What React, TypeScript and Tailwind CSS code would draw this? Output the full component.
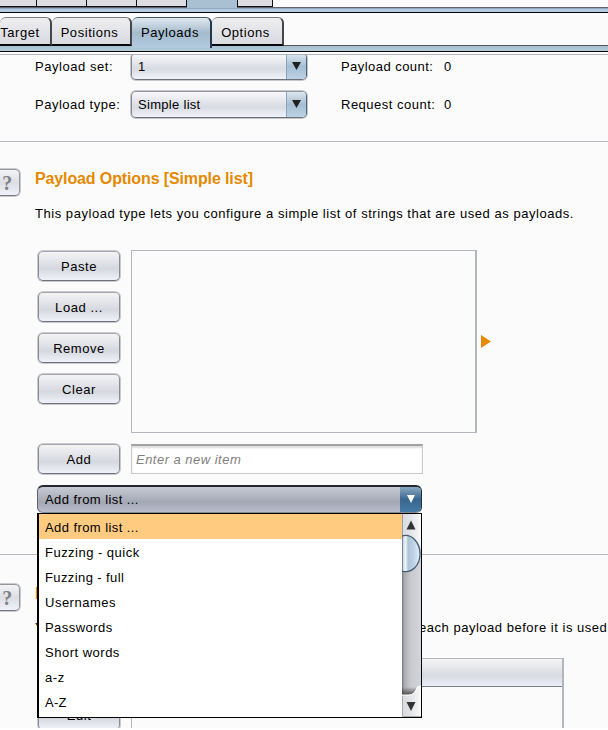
import type { ReactNode } from 'react';

const items = [
  ['Add from list ...', 'tracking-[0.42px]'],
  ['Fuzzing - quick', 'tracking-[0.48px]'],
  ['Fuzzing - full', 'tracking-[0.4px]'],
  ['Usernames', 'tracking-[0.5px]'],
  ['Passwords', 'tracking-[0.45px]'],
  ['Short words', 'tracking-[0.5px]'],
  ['a-z', 'tracking-[0.6px]'],
  ['A-Z', 'tracking-[0.3px]'],
];

function Button({ children, className = '' }: { children: ReactNode; className?: string }) {
  return (
    <button className={`mx-px flex h-[30px] w-[82px] shrink-0 items-center justify-center rounded-[5px] border border-t-[#a5a7ac] border-x-[#8a8c92] border-b-[#70727a] bg-linear-to-b from-[#f4f4f6] via-[#d6d8df] via-60% to-[#f0f2fb] pt-[2px] shadow-[0_0_0_1px_#c9cacf] ${className}`}>
      {children}
    </button>
  );
}

function Select({ value, className = '' }: { value: string; className?: string }) {
  return (
    <div className={`mr-px ml-px flex h-[27px] w-[176px] overflow-hidden rounded-[5px] border border-t-[#94969c] border-r-[#4c6478] border-b-[#6d7079] border-l-[#85878d] bg-linear-to-b from-[#f8f8fa] via-[#d9dbe3] via-60% to-[#f1f2fa] shadow-[0_0_0_1px_#c5c7cc] ${className}`}>
      <span className="flex flex-1 items-center pt-px pl-[6px]">{value}</span>
      <span className="flex w-[20px] items-center justify-center border-l border-[#8ca5ba] bg-linear-to-b from-[#dce7ef] via-[#a5bed2] via-50% to-[#bdd3e5] pb-px">
        <svg width="9" height="8" viewBox="0 0 9 8"><path d="M0 0H9L4.5 8Z" fill="#202020" /></svg>
      </span>
    </div>
  );
}

function Help() {
  return (
    <div className="-ml-[7px] flex h-[27px] w-[27px] shrink-0 items-center justify-center rounded-[5px] border border-[#94969c] border-b-[#777981] bg-linear-to-b from-[#f4f4f6] via-[#dcdee4] to-[#f0f2fa] pl-[2px] font-['Liberation_Serif',serif] text-[20px] font-bold text-[#808185] shadow-[0_0_0_1px_#c9cacf]">
      ?
    </div>
  );
}

function Tab({ label, active = false, className }: { label: string; active?: boolean; className: string }) {
  return (
    <div className={`flex shrink-0 items-center justify-center rounded-t-[6px] border-t border-r-2 ${active ? 'h-[31px] border-t-[#43566a] border-r-[#24364a] bg-linear-to-b from-[#e1e8ee] via-[#a4bbcd] via-50% to-[#b3cbdf]' : 'h-[29px] border-b-2 border-t-[#77797e] border-r-[#44464d] border-b-[#08080f] bg-linear-to-b from-[#eeeef0] to-[#d9dae0] pt-[4px]'} ${className}`}>
      {label}
    </div>
  );
}

export default function App() {
  return (
    <div className="h-[730px] w-[608px] overflow-hidden bg-white font-['Liberation_Sans',Arial,sans-serif] text-[13px] leading-[16px] tracking-[0.55px] text-black">
      <div className="relative h-[728px] overflow-hidden bg-[#fbfbfb]">
        <div className="flex h-[8px] border-b border-[#60636a]">
          <div className="w-[37px] border-r border-b border-[#101018] bg-[#dcdce1]" />
          <div className="w-[50px] border-r border-b border-[#101018] bg-[#dcdce1]" />
          <div className="w-[50px] border-r border-b border-[#101018] bg-[#dcdce1]" />
          <div className="w-[50px] border-r border-b border-[#101018] bg-[#dcdce1]" />
          <div className="h-[8px] w-[50px] bg-[#a9c0d2]" />
          <div className="w-[36px] border-x border-b border-[#101018] bg-[#dcdce1]" />
        </div>
        <div className="h-[5px] border-t border-b border-t-[#91a9be] border-b-[#05050c] bg-[#b3cce2]" />
        <div className="flex h-[33px] border-b border-[#55585f] pt-[4px]">
          <Tab label="Target" className="w-[52px] pr-[10px]" />
          <Tab label="Positions" className="w-[80px] pr-[3px]" />
          <Tab label="Payloads" active className="w-[80px] pr-[2px]" />
          <Tab label="Options" className="w-[72px] pr-[3px]" />
        </div>
        <div className="h-[6px] border-b border-[#05050c] bg-linear-to-b from-[#a7bfd0] to-[#b3cdd9]" />
        <div className="h-[3px] border-b border-[#b1b3ba] bg-white" />

        <section className="h-[87px] overflow-hidden border-b border-[#b9bac1] pl-[35px]">
          <div className="-mt-[3px] flex h-[28px] items-center">
            <span className="w-[95px] pt-[2px] tracking-[0.55px]">Payload set:</span>
            <Select value="1" />
            <span className="ml-[33px] w-[103px] pt-[2px] tracking-[0.45px]">Payload count:</span>
            <span className="pt-[2px]">0</span>
          </div>
          <div className="mt-[10px] flex h-[28px] items-center">
            <span className="w-[95px] pt-[2px] tracking-[0.5px]">Payload type:</span>
            <Select value="Simple list" className="tracking-[0.3px]" />
            <span className="ml-[33px] w-[103px] pt-[2px] tracking-[0.5px]">Request count:</span>
            <span className="pt-[2px]">0</span>
          </div>
        </section>

        <section className="h-[413px] border-b border-[#b9bac1] pt-[26px]">
          <div className="flex h-[28px] items-start pt-px">
            <Help />
            <h2 className="-mt-px ml-[15px] text-[16px] leading-[21px] font-bold tracking-[-0.12px] text-[#e58900]">Payload Options [Simple list]</h2>
          </div>
          <p className="mt-[10px] pl-[35px] tracking-[0.54px]">This payload type lets you configure a simple list of strings that are used as payloads.</p>
          <div className="mt-[28px] flex pl-[37px]">
            <div className="flex flex-col gap-[11px] pt-px">
              <Button>Paste</Button>
              <Button>Load ...</Button>
              <Button>Remove</Button>
              <Button>Clear</Button>
            </div>
            <div className="ml-[10px] h-[183px] w-[346px] border border-r-2 border-[#b4b6bf]" />
            <svg className="mt-[85px] ml-[4px]" width="10" height="13" viewBox="0 0 10 13"><path d="M0 0L10 6.5L0 13Z" fill="#e58900" /></svg>
          </div>
          <div className="mt-[11px] flex h-[31px] pl-[37px]">
            <Button>Add</Button>
            <div className="ml-[10px] flex h-[30px] w-[292px] items-center border border-t-2 border-[#c9cacd] border-t-[#a1a2a4] bg-white pl-[4px] tracking-[0.48px] text-[#808080] italic shadow-[inset_0_2px_2px_#dddddd]">Enter a new item</div>
          </div>
          <div className="mt-[10px] ml-[37px] flex h-[28px] w-[385px] overflow-hidden rounded-[6px] border border-t-2 border-t-[#25272d] border-r-[#1c3146] border-b-[#858893] border-l-[#5f6269] bg-linear-to-b from-[#c8cbd4] via-[#a4a8b4] via-60% to-[#b9bdcc]">
            <span className="flex flex-1 items-center pt-px pl-[7px] tracking-[0.42px]">Add from list ...</span>
            <span className="flex w-[21px] items-center justify-center bg-linear-to-b from-[#8caac2] via-[#39668e] via-50% to-[#457aa6] pb-px">
              <svg width="8" height="8" viewBox="0 0 8 8"><path d="M0 0H8L4 8Z" fill="#fff" /></svg>
            </span>
          </div>
        </section>

        <section className="pt-[28px]">
          <div className="flex h-[28px] items-start pt-px">
            <Help />
            <h2 className="-mt-px ml-[15px] text-[16px] leading-[21px] font-bold text-[#e58900]">Payload Processing</h2>
          </div>
          <p className="mt-[9px] flex pl-[35px] whitespace-nowrap">
            <span className="w-[384px] shrink-0 tracking-[0.55px]">You can define rules to perform various processing tasks on</span>
            <span className="tracking-[0.52px]">each payload before it is used</span>
          </p>
          <div className="mt-[22px] flex pl-[37px]">
            <div className="flex flex-col gap-[11px] pt-px">
              <Button>Add</Button>
              <Button>Edit</Button>
            </div>
            <div className="ml-[10px] h-[90px] w-[433px] border border-r-2 border-[#b4b6bf]">
              <div className="h-[28px] border-b border-[#7c8089] bg-linear-to-b from-[#f4f4f5] via-[#d9dbe1] via-60% to-[#ebeef8]" />
            </div>
          </div>
        </section>

        <div className="absolute top-[513px] left-[37px] flex h-[205px] w-[385px] border border-l-2 border-black bg-white">
          <ul className="w-[363px]">
            {items.map(([label, tracking], i) => (
              <li key={label} className={`flex h-[25px] items-center pt-[2px] pl-[6px] ${tracking} ${i === 0 ? 'bg-[#ffcb80]' : ''}`}>{label}</li>
            ))}
          </ul>
          <svg width="19" height="203" viewBox="0 0 19 203">
            <defs>
              <linearGradient id="track"><stop offset="0" stopColor="#77787e" /><stop offset=".12" stopColor="#aaaab1" /><stop offset=".45" stopColor="#c8c8ce" /><stop offset="1" stopColor="#d4d5dc" /></linearGradient>
              <linearGradient id="end"><stop offset="0" stopColor="#d8dae0" /><stop offset=".45" stopColor="#e2e4e8" /><stop offset="1" stopColor="#fafafa" /></linearGradient>
              <linearGradient id="thumb"><stop offset="0" stopColor="#b7cadb" /><stop offset=".2" stopColor="#f0f5fa" /><stop offset=".34" stopColor="#adc4d8" /><stop offset=".65" stopColor="#bed4e6" /><stop offset="1" stopColor="#e0f2ff" /></linearGradient>
              <linearGradient id="shade" x1="0" y1="0" x2="0" y2="1"><stop offset="0" stopColor="#333" stopOpacity="0" /><stop offset="1" stopColor="#333" stopOpacity=".8" /></linearGradient>
            </defs>
            <rect width="19" height="203" fill="url(#track)" />
            <path d="M0 0H19V36C18 28 12 21 0 22Z" fill="url(#end)" />
            <path d="M0 0V22" stroke="#9b9ca4" strokeWidth="2" />
            <path d="M9 6.5L13.5 15.5H4.5Z" fill="#333" />
            <path d="M0 22C10 19 18 29 18 40S10 60 0 57Z" fill="url(#thumb)" stroke="#435a70" strokeWidth="1.2" />
            <path d="M0 173H15L11 181H0Z" fill="url(#shade)" />
            <path d="M0 181H6Q13 181 15 173L19 171V203H0Z" fill="url(#end)" />
            <path d="M0 181H7Q13 181 16 172" fill="none" stroke="#fff" />
            <path d="M.5 182V202.5H19" fill="none" stroke="#aaaab1" />
            <path d="M4.5 188H13.5L9 197Z" fill="#333" />
          </svg>
        </div>
      </div>
    </div>
  );
}
